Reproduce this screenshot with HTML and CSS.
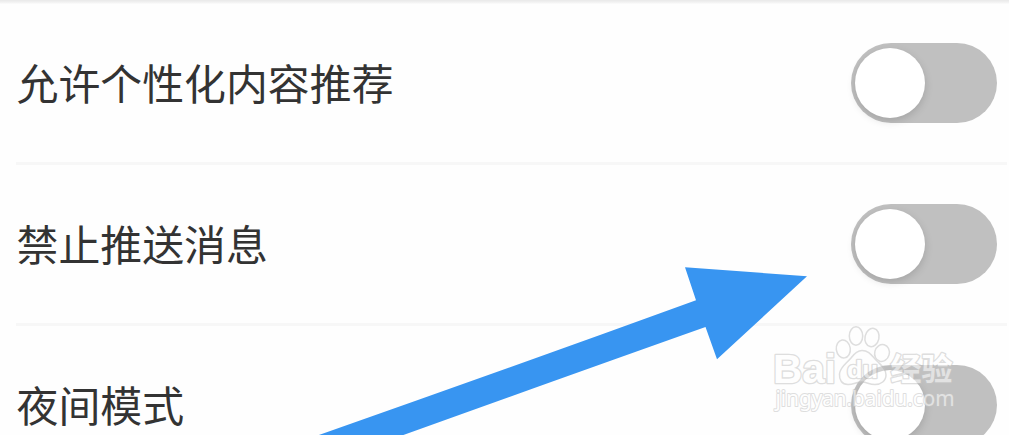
FILE: index.html
```html
<!DOCTYPE html>
<html lang="zh-CN">
<head>
<meta charset="utf-8">
<title>设置</title>
<link rel="stylesheet" href="styles.css">
</head>
<body>
<main class="screen">
  <div class="top-edge"></div>
  <ul class="settings">
    <li class="row"><span class="label">允许个性化内容推荐</span><span class="toggle" role="switch" aria-checked="false"><span class="knob"></span></span></li>
    <li class="row"><span class="label">禁止推送消息</span><span class="toggle" role="switch" aria-checked="false"><span class="knob"></span></span></li>
    <li class="row"><span class="label">夜间模式</span><span class="toggle" role="switch" aria-checked="false"><span class="knob"></span></span></li>
  </ul>
  <svg class="overlay" viewBox="0 0 1009 435" width="1009" height="435">
    <path class="arrow" d="M317.500 435.500Q510 368 696 300.300L685 267.300L807 276.200L717 359.300L705.500 327Q580 371.500 402 435.500Z"/>
    <g class="mark">
      <g class="paw">
        <ellipse cx="843.300" cy="349" rx="7" ry="9" transform="rotate(-8 843 349)"/>
        <ellipse cx="856" cy="336" rx="6.700" ry="9.200"/>
        <ellipse cx="872" cy="337.500" rx="7" ry="9.200" transform="rotate(12 872 337.500)"/>
        <ellipse cx="882" cy="353" rx="7.300" ry="8.600" transform="rotate(15 882 353)"/>
        <path d="M862 350.500C869 350.500 872 356 877 361C882 366 886 369 886 375C886 381 881 384.500 875 384.500C869 384.500 867 382 862 382C856 382 854 384.500 848 384.500C842 384.500 839 380 839.500 374C840 367 846 364 851 358C854 354 857 350.500 862 350.500Z"/>
      </g>
      <text class="brand" x="773" y="382.500" textLength="63" lengthAdjust="spacingAndGlyphs">Bai</text>
      <text class="paw-text" x="847" y="377.500" textLength="31" lengthAdjust="spacingAndGlyphs">du</text>
      <text class="brand-cn" x="890.500" y="380" textLength="62" lengthAdjust="spacingAndGlyphs">经验</text>
      <text class="site" x="775.500" y="406" textLength="179" lengthAdjust="spacingAndGlyphs">jingyan.baidu.com</text>
    </g>
  </svg>
</main>
</body>
</html>
```
FILE: styles.css
```css
body {
  margin: 0;
  background: #fefefe;
  font-family: "Noto Sans CJK SC", sans-serif;
}

.screen {
  position: relative;
  height: 435px;
  overflow: hidden;
}

.top-edge {
  height: 4px;
  background: linear-gradient(#e9e9e9 0, #ededed 1px, #f6f6f6 3px, #fdfdfd 4px);
}

.settings {
  margin: 0;
  padding: 0 2px 0 15.5px;
  list-style: none;
}

.row {
  display: flex;
  align-items: center;
  justify-content: space-between;
  box-sizing: border-box;
  height: 161px;
  padding: 0 10.5px 0 1px;
  border-bottom: 3px solid #f7f7f7;
}

.label {
  padding-bottom: 2px;
  color: #333;
  font-size: 41.9px;
  line-height: 60px;
}

.toggle {
  display: flex;
  align-items: center;
  box-sizing: border-box;
  width: 146px;
  height: 80px;
  padding: 0 4.5px;
  border-radius: 40px;
  background: #c0c0c0;
}

.knob {
  width: 70px;
  height: 70px;
  border-radius: 50%;
  background: #fff;
  box-shadow: 0 3px 8px rgba(0, 0, 0, 0.15);
}

.overlay {
  position: absolute;
  top: 0;
  left: 0;
}

.arrow {
  fill: #3895f1;
}

.mark {
  fill: #fff;
  stroke: #c4c4c4;
  stroke-width: 2.6px;
  stroke-linejoin: round;
  paint-order: stroke;
  opacity: 0.55;
}

.paw {
  fill: rgba(255, 255, 255, 0.6);
  stroke-width: 1.5px;
  paint-order: normal;
}

.brand {
  font: bold 41px "Liberation Sans", sans-serif;
}

.paw-text {
  font: bold 24px "Liberation Sans", sans-serif;
}

.brand-cn {
  font: 700 31px "Noto Sans CJK SC", sans-serif;
}

.site {
  font: 22px "Noto Sans", sans-serif;
  stroke-width: 2px;
}
```
